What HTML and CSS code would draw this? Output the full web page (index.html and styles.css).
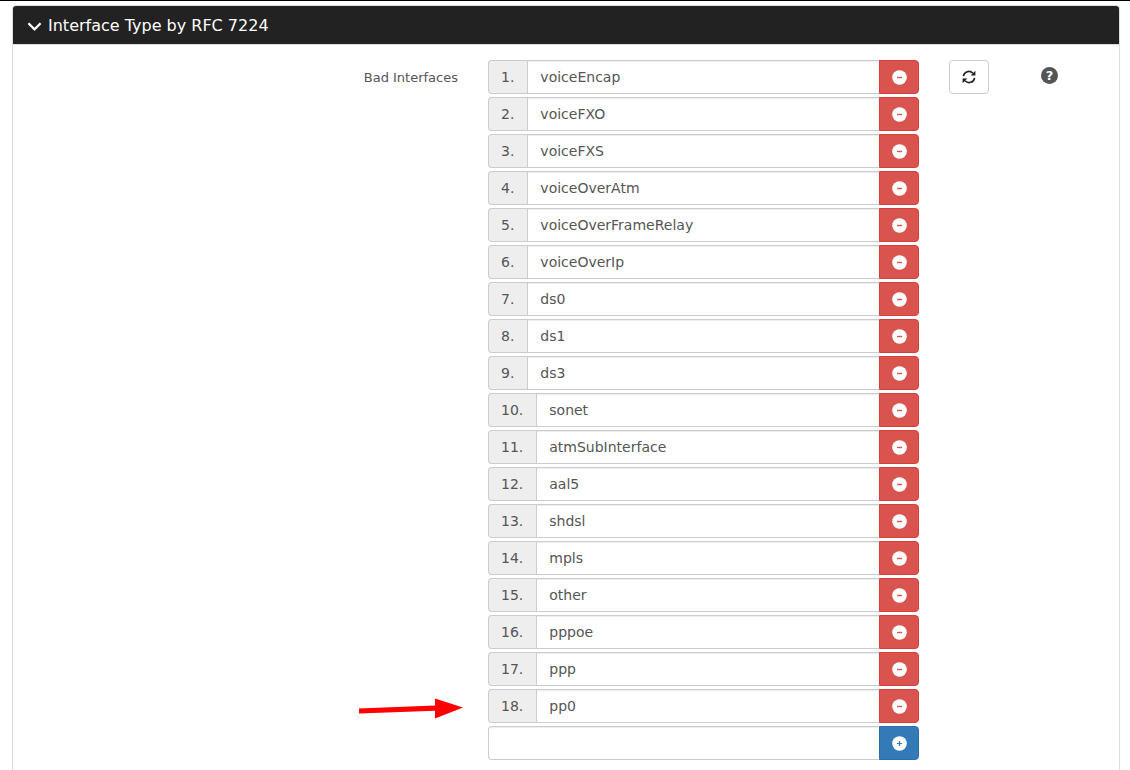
FILE: index.html
```
<!DOCTYPE html>
<html lang="en">
<head>
    <meta charset="UTF-8">
    <meta name="viewport" content="width=device-width, initial-scale=1.0">
    <title>Interface Type by RFC 7224</title>
    <link rel="stylesheet" href="styles.css">
</head>
<body>

<!-- Shared icons -->
<svg class="icon-defs" aria-hidden="true">
    <symbol id="icon-minus" viewBox="0 0 15 15">
        <circle cx="7.5" cy="7.5" r="7.3" fill="#fff"/>
        <path d="M5 7.5h5" stroke="#d9534f" stroke-width="1.4"/>
    </symbol>
    <symbol id="icon-plus" viewBox="0 0 15 15">
        <circle cx="7.5" cy="7.5" r="7.3" fill="#fff"/>
        <path d="M5 7.5h5M7.5 5v5" stroke="#337ab7" stroke-width="1.2"/>
    </symbol>
</svg>

<section class="panel">
    <h4 class="panel-heading">
        <svg class="icon-chevron" viewBox="0 0 16 16" aria-hidden="true"><path d="M1.5 4.5L8 11L14.5 4.5" fill="none" stroke="#fff" stroke-width="2.4"/></svg>
        <a href="#interfaces">Interface Type by RFC 7224</a>
    </h4>

    <div class="panel-body" id="interfaces">
        <label class="control-label" for="if-new">Bad Interfaces</label>

        <div class="interface-list" id="list"></div>

        <div class="col">
            <button class="btn btn-default" type="button" aria-label="Reset to default">
                <svg class="icon-refresh" viewBox="0 0 14 14" aria-hidden="true">
                    <path d="M1.4 6.2A5.5 5.5 0 0 1 10.9 3.2M12.6 7.8A5.5 5.5 0 0 1 3.1 10.8" fill="none" stroke="#222" stroke-width="1.6"/>
                    <path d="M13.4 0.8V5.6H8.6ZM0.6 13.2V8.4H5.4Z" fill="#222"/>
                </svg>
            </button>
        </div>

        <div class="col">
            <button class="help" type="button" aria-label="Help">?</button>
        </div>
    </div>
</section>

<script src="script.js"></script>
</body>
</html>
```
FILE: styles.css
```
* {
    box-sizing: border-box;
}

body {
    margin: 0;
    padding: 4px 10px 0 12px;
    border-top: 1px solid #000;
    background-color: #fff;
    color: #555;
    font-family: Verdana, "DejaVu Sans", sans-serif;
    font-size: 14px;
    line-height: 20px;
}

button,
input {
    font: inherit;
    color: inherit;
}

.icon-defs {
    display: none;
}

.panel {
    border: 1px solid #ddd;
    border-radius: 4px;
}

.panel-heading {
    display: flex;
    align-items: center;
    gap: 6px;
    margin: 0;
    padding: 10px 14px 8px;
    background-color: #222;
    border-bottom: 1px solid #ddd;
    border-radius: 3px 3px 0 0;
    font-size: 16px;
    font-weight: normal;
}

.panel-heading a {
    color: #fff;
    text-decoration: none;
}

.icon-chevron {
    width: 15px;
    height: 15px;
}

.panel-body {
    display: grid;
    grid-template-columns: 5fr 5fr 1fr 1fr;
    align-items: start;
    padding: 15px 2px 15px 0;
}

.control-label {
    padding: 8px 15px 0;
    font-size: 13px;
    text-align: right;
}

.col {
    padding: 0 16px;
}

.interface-list {
    display: flex;
    flex-direction: column;
    gap: 3px;
    padding: 0 14px 0 15px;
}

.input-group {
    position: relative;
    display: flex;
    height: 34px;
}

.input-group-addon {
    padding: 6px 13px 6px 12px;
    background-color: #eee;
    border: 1px solid #ccc;
    border-right: 0;
    border-radius: 4px 0 0 4px;
}

.form-control {
    flex: 1;
    min-width: 0;
    padding: 6px 12px;
    background-color: #fff;
    border: 1px solid #ccc;
    border-right: 0;
    border-radius: 0;
    box-shadow: inset 0 1px 1px rgba(0, 0, 0, 0.075);
}

.form-control:first-child {
    border-radius: 4px 0 0 4px;
}

.btn {
    display: flex;
    align-items: center;
    justify-content: center;
    width: 40px;
    height: 34px;
    padding: 0;
    border: 1px solid #ccc;
    border-radius: 4px;
    cursor: pointer;
}

.input-group .btn {
    border-radius: 0 4px 4px 0;
}

.btn svg {
    width: 15px;
    height: 15px;
}

.btn .icon-refresh {
    width: 14px;
    height: 14px;
}

.btn-default {
    background-color: #fff;
}

.btn-danger {
    background-color: #d9534f;
    border-color: #d43f3a;
}

.btn-primary {
    background-color: #337ab7;
    border-color: #2e6da4;
}

.help {
    display: block;
    width: 17px;
    height: 17px;
    margin-top: 7px;
    padding: 0;
    background-color: #555;
    border: 0;
    border-radius: 50%;
    color: #fff;
    font-size: 13px;
    font-weight: bold;
    line-height: 17px;
    cursor: pointer;
}

/* Arrow pointing at the last saved interface */
.arrow {
    position: absolute;
    top: 9px;
    right: calc(100% + 25px);
    width: 104px;
    height: 22px;
}
```
FILE: script.js
```
const interfaces = [
    'voiceEncap', 'voiceFXO', 'voiceFXS', 'voiceOverAtm', 'voiceOverFrameRelay', 'voiceOverIp',
    'ds0', 'ds1', 'ds3', 'sonet', 'atmSubInterface', 'aal5', 'shdsl', 'mpls', 'other',
    'pppoe', 'ppp', 'pp0'
];

const arrow = `<svg class="arrow" viewBox="0 0 104 22" aria-hidden="true">
    <path d="M0 15.5L76 12.7V20.5L104 9.5L76 0.5V7.5L0 10.5Z" fill="#f00"/>
</svg>`;

let rows = '';
interfaces.forEach((name, i) => {
    const last = i === interfaces.length - 1;
    rows += `<div class="input-group">
        ${last ? arrow : ''}
        <label class="input-group-addon" for="if-${i}">${i + 1}.</label>
        <input class="form-control" id="if-${i}" type="text" value="${name}">
        <button class="btn btn-danger" type="button" aria-label="Remove ${name}"><svg><use href="#icon-minus"/></svg></button>
    </div>`;
});

// Empty row for a new interface
rows += `<div class="input-group">
    <input class="form-control" id="if-new" type="text">
    <button class="btn btn-primary" type="button" aria-label="Add interface"><svg><use href="#icon-plus"/></svg></button>
</div>`;

document.getElementById('list').innerHTML = rows;
```
